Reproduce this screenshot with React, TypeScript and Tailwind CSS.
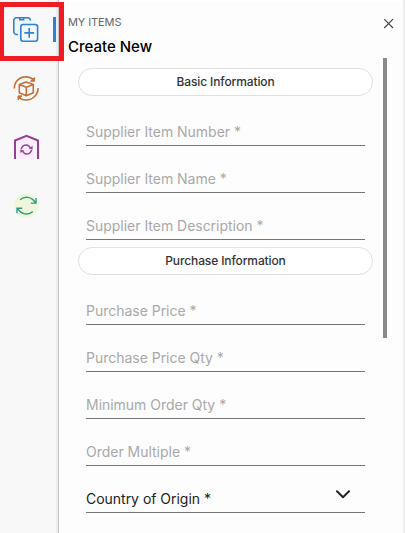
const supplierFields = ['Supplier Item Number *', 'Supplier Item Name *', 'Supplier Item Description *'];
const purchaseFields = ['Purchase Price *', 'Purchase Price Qty *', 'Minimum Order Qty *', 'Order Multiple *'];

function CreateIcon() {
  return (
    <svg className="block h-[30px] w-[30px]" viewBox="0 0 30 30" fill="none" stroke="#3182ce" strokeWidth="1.6">
      <circle cx="15" cy="15.500" r="12.500" fill="#edf5fd" stroke="none" />
      <path d="M7 20.500H5.500A2.700 2.700 0 0 1 2.800 17.800V6.500A2.700 2.700 0 0 1 5.500 3.800h11.200A2.700 2.700 0 0 1 19.400 6.500" />
      <path d="M8.800 4v1.800h3.800V4" />
      <rect x="9.800" y="10.500" width="16.800" height="16.800" rx="2.500" fill="#f2f8fe" />
      <path d="M18.200 14v9.800M13.300 18.900h9.800" />
    </svg>
  );
}

function PackageIcon() {
  return (
    <svg className="block h-[30px] w-[30px]" viewBox="0 0 30 30" fill="none" stroke="#c4713a" strokeWidth="1.6" strokeLinejoin="round">
      <path d="M3.300 15.500C3.300 8.500 8.300 3.900 14.800 3.900c3.400 0 6.100 1.200 8 3.300M27 15c.2 6.800-5.200 12-12 12-3.300 0-6-1.200-7.800-3.500" />
      <path d="M23.500 4.500v3.700h-4zM7 26.700v-3.800h4z" fill="#c4713a" strokeWidth="1" />
      <path d="m15.300 9 7 2.600v8.200l-7 3-7-3v-8.200zM8.300 11.600l7 2.700 7-2.700M15.300 14.300v8.500" />
    </svg>
  );
}

function WarehouseIcon() {
  return (
    <svg className="block h-[30px] w-[30px]" viewBox="0 0 30 30" fill="none" stroke="#934097">
      <path d="M4 27V8.500L15.500 3.800 27 8.500V27" fill="#fceefd" strokeWidth="2" />
      <g strokeWidth="1.500">
        <path d="M10.300 17c.5-2.900 3.500-4.800 6.300-3.700 1.200.5 2.100 1.400 2.600 2.500M20.600 18c-.5 2.900-3.500 4.800-6.300 3.700-1.200-.5-2.100-1.400-2.600-2.500" />
        <path d="m17.700 16.200 3.700 1.300.2-3.200zM13.200 18.800l-3.700-1.300-.2 3.200z" fill="#934097" strokeWidth=".2" />
      </g>
    </svg>
  );
}

function SyncIcon() {
  return (
    <svg className="block h-[30px] w-[30px]" viewBox="0 0 30 30" fill="none" stroke="#319d87" strokeWidth="1.400">
      <circle cx="15.500" cy="14.500" r="12.500" fill="#f0f6db" stroke="none" />
      <path d="M9.200 8.800c4.300-4.200 11.500-3.400 15.300 3M25 7v5.100h-5.200M21.800 20.400c-4.300 4.200-11.500 3.400-15.300-3M6 22.300v-5.100h5.200" />
    </svg>
  );
}

function SectionTitle({ title }: { title: string }) {
  return (
    <div className="flex h-7 w-[295px] items-center justify-center rounded-full border border-[#e1e1e1] bg-white text-xs font-medium tracking-[-0.12px] text-[#333]">
      {title}
    </div>
  );
}

function Field({ label }: { label: string }) {
  return (
    <div className="mx-2 flex h-[47px] w-[279px] items-end border-b border-[#757575] pb-1 text-sm leading-[18px] tracking-[-0.02px] text-[#a9a9a9]">
      {label}
    </div>
  );
}

export default function App() {
  return (
    <div className="relative flex h-[533px] w-[405px] overflow-hidden bg-[#fdfdfd] font-['Inter',sans-serif]">
      <nav className="flex w-[59px] shrink-0 flex-col gap-[29px] border-r border-[#c6c6c6] bg-[#f8f8f8] pt-[14px] pl-[11px] shadow-[inset_-2px_0_0_#ededed]">
        <div className="flex h-[30px]">
          <CreateIcon />
          <span className="ml-3 mt-[3px] h-[25px] w-[3px] bg-[#3182ce]" />
        </div>
        <PackageIcon />
        <WarehouseIcon />
        <SyncIcon />
      </nav>

      <main className="flex flex-1 flex-col border-t-2 border-white">
        <header className="flex h-[56px] justify-between pr-[9px] pl-[9px]">
          <div>
            <p className="mt-3 text-[11px] leading-4 tracking-[-0.1px] text-[#666]">MY ITEMS</p>
            <h1 className="mt-[7px] text-[15px] leading-5 font-medium text-black">Create New</h1>
          </div>
          <svg className="mt-4 h-[11px] w-[11px]" viewBox="0 0 11 11" stroke="#444" strokeWidth="1.200">
            <path d="m1.200 1.200 8.800 8.800M10 1.200l-8.800 8.800" />
          </svg>
        </header>
        <div className="flex flex-1">
          <form className="flex w-[324px] flex-col pt-[10px] pl-[19px]">
            <SectionTitle title="Basic Information" />
            <div className="mt-[3px] mb-[7px]">
              {supplierFields.map((label) => <Field key={label} label={label} />)}
            </div>
            <SectionTitle title="Purchase Information" />
            <div className="mt-[3px]">
              {purchaseFields.map((label) => <Field key={label} label={label} />)}
              <div className="mx-2 flex h-[47px] w-[279px] items-end justify-between border-b border-[#757575] pr-[15px] pb-1 text-sm leading-[18px] tracking-[-0.02px] text-[#222]">
                <span>Country of Origin *</span>
                <svg className="mb-[9px] h-[9px] w-[14px]" viewBox="0 0 14 9" fill="none" stroke="#212529" strokeWidth="2" strokeLinecap="round" strokeLinejoin="round">
                  <path d="m1 1.300 6 6 6-6" />
                </svg>
              </div>
            </div>
          </form>
          <div className="h-[280px] w-1 bg-[#898989]" />
        </div>
      </main>
      <div className="w-0.5 shrink-0 bg-[#efefef]" />
      <div className="pointer-events-none absolute top-[2px] left-[-1px] h-[59px] w-[65px] border-5 border-[#ee1c25]" />
    </div>
  );
}
